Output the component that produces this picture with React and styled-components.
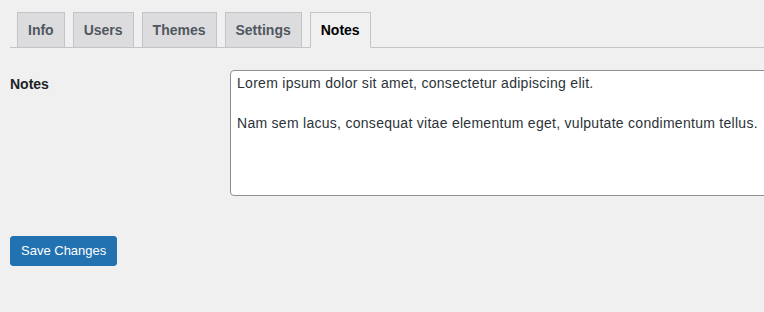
import React from 'react'
import styled, { createGlobalStyle } from 'styled-components'

const GlobalStyle = createGlobalStyle`
    html, body {
        margin: 0;
        background: #f0f0f1;
        overflow: hidden;
    }
    body {
        font-family: "Liberation Sans", Arial, sans-serif;
        color: #1d2327;
        font-size: 13px;
    }
`;

const Page = styled.div`
    padding: 12px 0 0 10px;
    width: 764px;
    box-sizing: border-box;
    overflow: hidden;
`;

const TabBar = styled.nav`
    display: flex;
    gap: 8px;
    padding-left: 7px;
    border-bottom: 1px solid #c3c4c7;
`;

const Tab = styled.a`
    display: block;
    margin-bottom: -1px;
    padding: 5px 10px;
    font-size: 14px;
    font-weight: 600;
    line-height: 24px;
    border: 1px solid #c3c4c7;
    border-bottom-color: ${p => (p.$active ? '#f0f0f1' : '#c3c4c7')};
    background: ${p => (p.$active ? '#f0f0f1' : '#dcdcde')};
    color: ${p => (p.$active ? '#000' : '#50575e')};
    text-decoration: none;
    cursor: pointer;
`;

const FormRow = styled.div`
    display: flex;
    margin-top: 7px;
`;

const Label = styled.label`
    width: 200px;
    flex: none;
    padding: 20px 10px 20px 0;
    font-size: 14px;
    font-weight: 600;
    line-height: 1.3;
    color: #1d2327;
`;

const Field = styled.div`
    padding: 15px 10px;
    flex: none;
`;

const TextArea = styled.textarea`
    display: block;
    width: 600px;
    height: 126px;
    box-sizing: border-box;
    padding: 2px 6px;
    font-family: "Liberation Sans", Arial, sans-serif;
    font-size: 14px;
    line-height: 20px;
    letter-spacing: 0.28px;
    color: #2c3338;
    background: #fff;
    border: 1px solid #8c8f94;
    border-radius: 4px;
    resize: none;
    outline: none;
`;

const Submit = styled.div`
    margin-top: 25px;
`;

const Button = styled.button`
    min-height: 30px;
    padding: 0 10px;
    font-family: "Liberation Sans", Arial, sans-serif;
    font-size: 13px;
    line-height: 28px;
    color: #fff;
    background: #2271b1;
    border: 1px solid #2271b1;
    border-radius: 3px;
    cursor: pointer;
`;

const tabs = ['Info', 'Users', 'Themes', 'Settings', 'Notes']

const notes = `Lorem ipsum dolor sit amet, consectetur adipiscing elit.

Nam sem lacus, consequat vitae elementum eget, vulputate condimentum tellus.`

const App = () => {
    return (
        <Page>
            <GlobalStyle />
            <TabBar>
                {tabs.map(t => (
                    <Tab key={t} $active={t === 'Notes'}>{t}</Tab>
                ))}
            </TabBar>
            <FormRow>
                <Label htmlFor="notes">Notes</Label>
                <Field>
                    <TextArea id="notes" defaultValue={notes} />
                </Field>
            </FormRow>
            <Submit>
                <Button type="submit">Save Changes</Button>
            </Submit>
        </Page>
    )
}

export default App
